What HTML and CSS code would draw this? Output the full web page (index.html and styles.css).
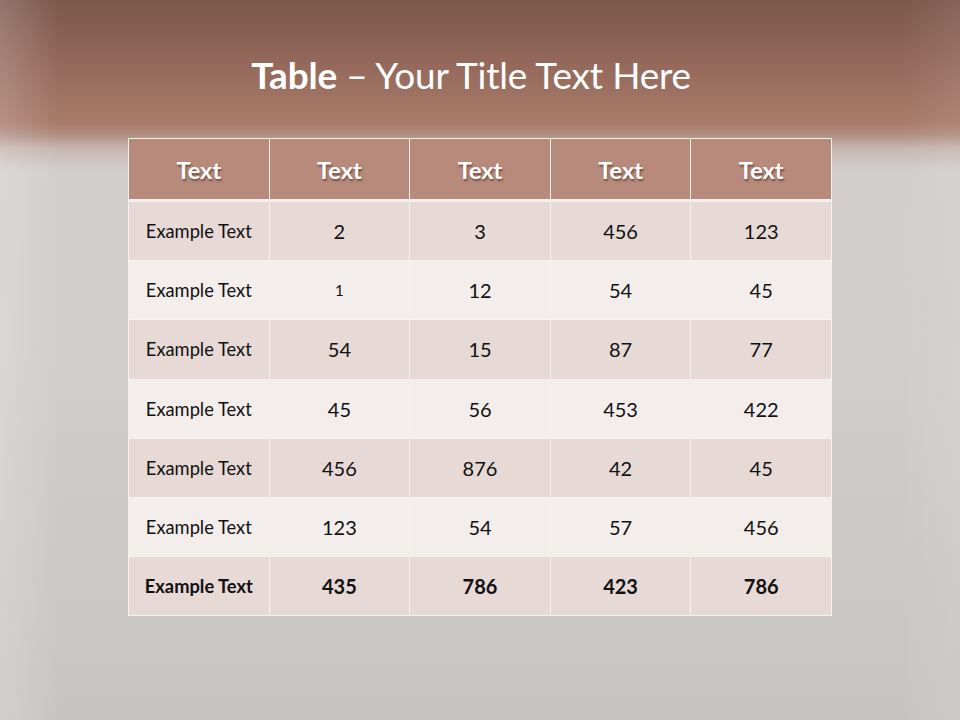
FILE: index.html
```html
<!DOCTYPE html>
<html>
<head>
<meta charset="utf-8">
<link rel="stylesheet" href="styles.css">
</head>
<body>
<div class="slide">
  <div class="title-band">
    <h1 class="title"><b>Table</b> – Your Title Text Here</h1>
  </div>
  <table class="data">
    <thead>
      <tr><th>Text</th><th>Text</th><th>Text</th><th>Text</th><th>Text</th></tr>
    </thead>
    <tbody>
      <tr class="odd"><td class="lbl">Example Text</td><td>2</td><td>3</td><td>456</td><td>123</td></tr>
      <tr class="even"><td class="lbl">Example Text</td><td class="small">1</td><td>12</td><td>54</td><td>45</td></tr>
      <tr class="odd"><td class="lbl">Example Text</td><td>54</td><td>15</td><td>87</td><td>77</td></tr>
      <tr class="even"><td class="lbl">Example Text</td><td>45</td><td>56</td><td>453</td><td>422</td></tr>
      <tr class="odd"><td class="lbl">Example Text</td><td>456</td><td>876</td><td>42</td><td>45</td></tr>
      <tr class="even"><td class="lbl">Example Text</td><td>123</td><td>54</td><td>57</td><td>456</td></tr>
      <tr class="odd total"><td class="lbl">Example Text</td><td>435</td><td>786</td><td>423</td><td>786</td></tr>
    </tbody>
  </table>
</div>
</body>
</html>
```
FILE: styles.css
```css
html, body {
  margin: 0;
  padding: 0;
}
.slide {
  width: 960px;
  height: 720px;
  overflow: hidden;
  font-family: Lato, "Open Sans", sans-serif;
  background:
    linear-gradient(90deg, rgba(255,255,255,0.18) 0px, rgba(255,255,255,0) 60px, rgba(255,255,255,0) 900px, rgba(255,255,255,0.08) 960px),
    linear-gradient(180deg, #7a584a 0px, #93685a 60px, #a77a69 122px, #b18e83 135px, #c7b5b0 148px, #d2cecd 170px, #d0cecc 380px, #c7c5c2 720px);
}
.title-band {
  height: 138px;
  display: flex;
  justify-content: center;
  align-items: flex-start;
}
.title {
  margin: 52px 0 0 0;
  font-weight: 400;
  font-size: 37px;
  line-height: 46px;
  color: #ffffff;
  letter-spacing: -0.2px;
  padding-right: 18px;
}
.title b {
  font-weight: 700;
}
.data {
  margin-left: 128px;
  width: 704px;
  border-collapse: collapse;
  table-layout: fixed;
  color: #111;
}
.data th, .data td {
  border: 1px solid #f6f1ef;
  text-align: center;
  padding: 0;
}
.data th {
  height: 58px;
  background: #b88a7b;
  color: #fff;
  font-weight: 700;
  font-size: 23.5px;
  text-shadow: 1px 2px 2px rgba(60, 30, 20, 0.55);
  border-bottom: 3px solid #f6f1ef;
  padding-top: 2px;
}
.data td {
  height: 58.2px;
  font-size: 20px;
}
.data td.lbl {
  font-size: 18.3px;
}
.data td.small {
  font-size: 15px;
}
.odd td {
  background: #e6d9d6;
}
.even td {
  background: #f3eeec;
}
.total td {
  font-weight: 700;
}
```
